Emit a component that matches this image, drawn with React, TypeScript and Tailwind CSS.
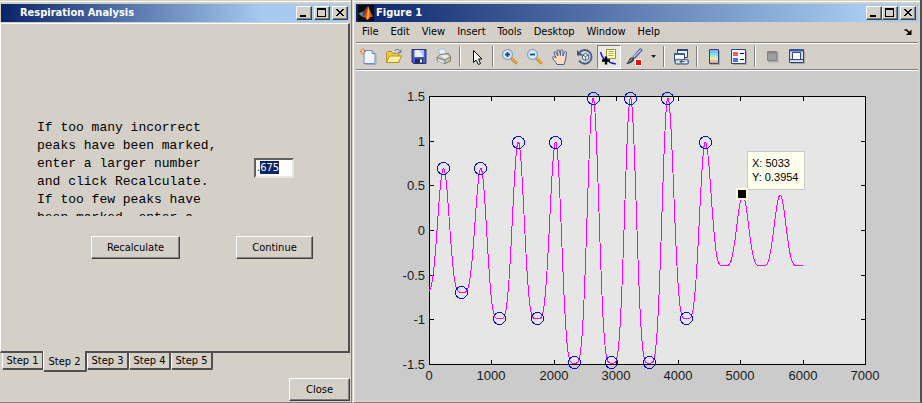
import { useEffect, useRef } from "react";
import type { ReactNode } from "react";

function CaptionButton({ label, children }: { label: string; children: ReactNode }) {
  return (
    <button
      aria-label={label}
      className="flex h-[14px] w-4 items-center justify-center border border-t-white border-l-white border-r-[#404040] border-b-[#404040] bg-[#d4d0c8] shadow-[inset_-1px_-1px_0_#808080]"
    >
      <svg width="12" height="10" viewBox="0 0 12 10" shapeRendering="crispEdges" fill="none" stroke="#000">
        {children}
      </svg>
    </button>
  );
}

function CaptionButtons({ joined = false }: { joined?: boolean }) {
  return (
    <div className={joined ? "ml-auto flex gap-[2px] pr-[2px]" : "ml-auto flex gap-[2px] pr-px"}>
      <div className={joined ? "flex" : "flex gap-[2px]"}>
        <CaptionButton label="Minimize">
          <path d="M2 8H8" strokeWidth="2" />
        </CaptionButton>
        <CaptionButton label="Maximize">
          <path d="M1.500 0.500V8.500H9.500V0.500" />
          <path d="M1 1H10" strokeWidth="2" />
        </CaptionButton>
      </div>
      <CaptionButton label="Close">
        <path
          d="M2 1h2v1h1v1h2v-1h1v-1h2v1h-1v1h-1v1h-1v1h1v1h1v1h1v1h-2v-1h-1v-1h-2v1h-1v1h-2v-1h1v-1h1v-1h1v-1h-1v-1h-1v-1h-1z"
          fill="#000"
          stroke="none"
        />
      </CaptionButton>
    </div>
  );
}

function PushButton({ children, className }: { children: ReactNode; className: string }) {
  return (
    <button
      className={`h-[23px] border border-t-white border-l-white border-r-[#404040] border-b-[#404040] bg-[#d4d0c8] shadow-[inset_-1px_-1px_0_#808080] ${className}`}
    >
      {children}
    </button>
  );
}

function ThresholdInput() {
  const ref = useRef<HTMLInputElement>(null);
  useEffect(() => {
    ref.current?.focus();
    ref.current?.setSelectionRange(1, 4);
  }, []);
  return (
    <input
      ref={ref}
      aria-label="Peak threshold"
      defaultValue=".675"
      className="h-5 w-10 border-2 border-t-[#606060] border-l-[#606060] border-r-[#e8e6e0] border-b-[#e8e6e0] bg-white px-px leading-4 caret-transparent outline-none selection:bg-[#0a246a] selection:text-white"
    />
  );
}

function StepTab({ label, active = false }: { label: string; active?: boolean }) {
  return (
    <button
      role="tab"
      aria-selected={active}
      className={
        active
          ? "-mt-[2px] -ml-px h-[21px] w-11 rounded-b-[2px] border-r-2 border-b-2 border-l border-l-white border-r-[#505050] border-b-[#505050] bg-[#d4d0c8] pt-[3px]"
          : "h-[17px] w-[42px] rounded-b-[2px] border-r-2 border-b-2 border-l border-l-white border-r-[#505050] border-b-[#505050] bg-[#d4d0c8]"
      }
    >
      {label}
    </button>
  );
}

function AnalysisWindow() {
  return (
    <section className="flex w-[352px] shrink-0 flex-col border-r border-b border-[#808080] bg-[#d4d0c8] pt-px">
      <div className="mb-[2px] h-px bg-white" />
      <header className="mr-[2px] ml-px flex h-[18px] items-center bg-[linear-gradient(90deg,#0a246a,#a6caf0_75%)] pl-[19px]">
        <h1 className="text-[11px] font-bold text-white">Respiration Analysis</h1>
        <CaptionButtons />
      </header>
      <div className="mt-px mr-px flex h-[330px] flex-col border-t border-r-2 border-b-2 border-l border-t-white border-l-white border-r-[#505050] border-b-[#505050] pt-[95px]">
        <div className="flex items-center pl-9">
          <p className="h-[97px] w-[217px] overflow-hidden font-['Liberation_Mono','Courier_New',monospace] text-[13px] leading-[18px] whitespace-pre">
            {"If too many incorrect\npeaks have been marked,\nenter a larger number\nand click Recalculate.\nIf too few peaks have\nbeen marked, enter a"}
          </p>
          <ThresholdInput />
        </div>
        <div className="mt-5 flex gap-14 pl-[90px]">
          <PushButton className="w-[89px]">Recalculate</PushButton>
          <PushButton className="w-[77px]">Continue</PushButton>
        </div>
      </div>
      <div role="tablist" className="flex h-[25px] items-start pl-[2px]">
        <StepTab label="Step 1" />
        <StepTab label="Step 2" active />
        <StepTab label="Step 3" />
        <StepTab label="Step 4" />
        <StepTab label="Step 5" />
      </div>
      <div className="flex justify-end pr-px">
        <PushButton className="w-[61px]">Close</PushButton>
      </div>
    </section>
  );
}

function Icon({ children }: { children: ReactNode }) {
  return (
    <svg width="18" height="18" viewBox="0 0 18 18" fill="none" aria-hidden="true">
      {children}
    </svg>
  );
}

function Tool({ label, pressed = false, children }: { label: string; pressed?: boolean; children: ReactNode }) {
  return (
    <button
      aria-label={label}
      className={
        pressed
          ? "flex h-6 w-6 items-center justify-center border border-t-[#808080] border-l-[#808080] border-r-white border-b-white bg-[#eae8e4]"
          : "flex h-6 w-[25px] items-center justify-center"
      }
    >
      {children}
    </button>
  );
}

function Separator() {
  return <div className="mx-[3px] h-[21px] w-[2px] border-r border-l border-l-[#808080] border-r-white" />;
}

function Magnifier({ plus }: { plus: boolean }) {
  return (
    <Icon>
      <path d="M10 10l6 5.500" stroke="#b4721c" strokeWidth="3" />
      <path d="M10.500 10l6 5.500" stroke="#f5a53c" strokeWidth="2" />
      <circle cx="6.500" cy="6.500" r="5" fill="#d5f0f8" stroke="#94a9c8" strokeWidth="1.500" />
      <path d={plus ? "M4 6.500h5M6.500 4v5" : "M4 6.500h5"} stroke="#1c4a94" strokeWidth="1.800" />
    </Icon>
  );
}

function Toolbar() {
  return (
    <div role="toolbar" className="flex h-[25px] items-center">
      <Tool label="New figure">
        <Icon>
          <path d="M4 2.500h8l3 3v10H4z" fill="#eef5ff" stroke="#6d8fc4" />
          <path d="M12 2.500v3h3" fill="#c5d8f2" stroke="#6d8fc4" />
          <path d="M5 16.500h11V6" stroke="#9fa8b8" />
          <path d="M3 0.500v6M0 3.500h6M1 1.500l4 4M5 1.500l-4 4" stroke="#e0643c" />
          <rect x="2" y="2.500" width="2" height="2" fill="#fff1a0" />
        </Icon>
      </Tool>
      <Tool label="Open">
        <Icon>
          <path d="M1.500 14.500V4.500l1-1h4l1.500 2h6v9z" fill="#f2c94e" stroke="#b8912c" />
          <path d="M1.500 14.500l3-6.500h12l-3 6.500z" fill="#fff09c" stroke="#b8912c" />
          <path d="M9.500 3c2-2.500 5-2 6 1M16 1.500v3h-3" stroke="#607d9c" />
        </Icon>
      </Tool>
      <Tool label="Save">
        <Icon>
          <path d="M2 1.500h14v14H3.500L2 14z" fill="#4c58cc" stroke="#282f88" />
          <path d="M4.500 2h9v7h-9z" fill="#e8f0ff" />
          <path d="M9 2h4.500v6z" fill="#afc5f1" />
          <path d="M5 10.500h8v5H5z" fill="#252b60" />
          <path d="M10 11.500h2v3h-2z" fill="#f0f4ff" />
        </Icon>
      </Tool>
      <Tool label="Print">
        <Icon>
          <path d="M5 8L3.500 1.500l6-1L12 8z" fill="#e8f2ff" stroke="#a6b8d4" />
          <path d="M2 9.500L5 6.500l8.500-1 2 3.500v4l-5.500 2.500-8-3z" fill="#c9c9c9" stroke="#777" />
          <path d="M2 9.500l8 2.500 5.500-3M10 12v3.500" stroke="#808080" />
          <path d="M5 7.500l7-.5 2 1.500-4 2z" fill="#eee" />
          <path d="M3 12.500l6 2" stroke="#fff" />
          <circle cx="13.500" cy="11.500" r="1" fill="#d9b13d" />
        </Icon>
      </Tool>
      <Separator />
      <Tool label="Edit plot">
        <Icon>
          <path d="M5.500 2.500v12l2.500-2.500 2.500 4.500 2-1-2-4.500h3.500z" fill="#fff" stroke="#000" />
        </Icon>
      </Tool>
      <Separator />
      <Tool label="Zoom in">
        <Magnifier plus />
      </Tool>
      <Tool label="Zoom out">
        <Magnifier plus={false} />
      </Tool>
      <Tool label="Pan">
        <Icon>
          <path
            d="M6 16.500C5 13.500 1.500 11.500 1.500 9.500 2 8 3.500 8.500 5 10L3 5c0-1.500 1.500-2 2-.5L7 8 6 3c.3-1.700 2-1.700 2.400 0L9.500 7.500 9.700 2.500c.5-1.300 2-1.200 2.200.3L12 8l1.500-4c.8-1.200 2.200-.5 2 .8L14.500 12l-1.500 4.500z"
            fill="#fbdcbc"
            stroke="#425f9e"
          />
        </Icon>
      </Tool>
      <Tool label="Rotate 3D">
        <Icon>
          <path d="M3.500 4.500A6.800 6.800 0 1 1 3 12.500" stroke="#4a5e86" strokeWidth="2" />
          <path d="M1 2v5.500h6z" fill="#3f5278" />
          <path d="M6.500 7L9.500 5.500 12.500 7v4L9.500 12.500 6.500 11z" fill="#e9f1ff" stroke="#526b9b" />
          <path d="M6.500 7l3 1.500 3-1.500M9.500 8.500v4" stroke="#526b9b" />
        </Icon>
      </Tool>
      <Tool label="Data cursor" pressed>
        <Icon>
          <path d="M0.500 4c1 4 2 6 4.500 8M9 14c3 1 4 1.500 7 2" stroke="#0000e8" strokeWidth="1.200" />
          <path d="M6.500 1.500h9v9h-9z" fill="#ffffb8" stroke="#909038" />
          <path d="M8.500 3.500h5M8.500 5.500h5M8.500 7.500h5" stroke="#a8a86c" />
          <path d="M6 8.500v8M2 12.500h8" stroke="#000" strokeWidth="2.400" />
        </Icon>
      </Tool>
      <Tool label="Brush">
        <Icon>
          <path d="M16.500 1L9 9.500" stroke="#3a4c9c" strokeWidth="3.400" />
          <path d="M16 1.500L9 9" stroke="#c5d6ff" strokeWidth="1.200" />
          <path d="M9.500 10C9 14 5 16 1 16c2-1 2-3 3-4.500C5.500 9.500 7.500 8.500 9.500 10z" fill="#424242" />
          <path d="M4 13.500l3-2.500" stroke="#aaa" />
          <path d="M10.500 11.500h6v6h-6z" fill="#f00" stroke="#fff" />
        </Icon>
      </Tool>
      <button aria-label="Brush colors" className="flex h-6 w-[14px] items-center justify-center pb-px">
        <svg width="5" height="3" viewBox="0 0 5 3" fill="#222">
          <path d="M0 0h5L2.500 3z" />
        </svg>
      </button>
      <Separator />
      <Tool label="Link plot">
        <Icon>
          <path d="M5.500 1.500h10v8h-10z" fill="#eef5ff" stroke="#2b4685" />
          <path d="M5.500 2h10" stroke="#2b4685" strokeWidth="2" />
          <path d="M2.500 5.500h10v8h-10z" fill="#fff" stroke="#2b4685" />
          <path d="M2.500 6h10" stroke="#3a5ca8" strokeWidth="2" />
          <rect x="3" y="11.500" width="7.500" height="4.500" rx="2.200" fill="#d6e2ef" stroke="#607890" strokeWidth="1.400" />
          <rect x="9" y="11.500" width="7.500" height="4.500" rx="2.200" fill="#d6e2ef" stroke="#607890" strokeWidth="1.400" />
          <path d="M7.500 13.500h5" stroke="#47607c" />
        </Icon>
      </Tool>
      <Separator />
      <Tool label="Insert colorbar">
        <Icon>
          <defs>
            <linearGradient id="colorbar" x1="0" y1="0" x2="0" y2="1">
              <stop offset="0" stopColor="#8c9cf0" />
              <stop offset=".35" stopColor="#7fe0f4" />
              <stop offset=".65" stopColor="#eaf0a0" />
              <stop offset="1" stopColor="#f08c84" />
            </linearGradient>
          </defs>
          <path d="M5 16.500h9.500V3" stroke="#a5a5a5" />
          <path d="M4.500 1.500h9v14h-9z" fill="url(#colorbar)" stroke="#2b4685" />
        </Icon>
      </Tool>
      <Tool label="Insert legend">
        <Icon>
          <path d="M3 16.500h13.500V3" stroke="#a5a5a5" />
          <path d="M1.500 1.500h14v14h-14z" fill="#f4f8ff" stroke="#2b4685" />
          <path d="M3 4h5v4H3z" fill="#e86464" />
          <path d="M3 10h5v4H3z" fill="#6464e8" />
          <path d="M10 5.500h4M10 11.500h4" stroke="#000" />
        </Icon>
      </Tool>
      <Separator />
      <Tool label="Hide plot tools">
        <Icon>
          <path d="M5 13.500h9.500V4" stroke="#aaa" strokeWidth="2" />
          <path d="M4.500 3.500h9v9h-9z" fill="#9f9f9f" stroke="#858585" />
          <path d="M4.500 4.500h9" stroke="#858585" strokeWidth="2" />
        </Icon>
      </Tool>
      <Tool label="Show plot tools">
        <Icon>
          <path d="M3 15.500h13.500V3" stroke="#a5a5a5" />
          <path d="M1.500 1.500h14v13h-14z" fill="#d9d9d9" stroke="#2b4685" />
          <path d="M1.500 2.500h14" stroke="#3a5ca8" strokeWidth="2" />
          <path d="M4.500 4.500h8v7h-8z" fill="#fff" stroke="#2b4685" />
          <path d="M2 11.500h13" stroke="#2b4685" />
        </Icon>
      </Tool>
    </div>
  );
}

const LEFT = 73;
const STEP_X = 436 / 7;
const ZERO_Y = 159;
const UNIT_Y = 268 / 3;

/* Values at the turning points of the respiration trace. */
const TROUGHS = [-0.7, -0.7, -1, -1, -1.5, -1.5, -1.5, -1, -0.4, -0.4, -0.4];
const PEAKS = [0.7, 0.7, 1, 1, 1.5, 1.5, 1.5, 1, 0.4, 0.4];
const PERIOD = 37.4;
const FIRST_PEAK = 14;

const toY = (v: number) => ZERO_Y - v * UNIT_Y;

function traceValue(x: number) {
  const k = Math.min(PEAKS.length - 1, Math.max(0, Math.round((x - FIRST_PEAK) / PERIOD)));
  const offset = (x - FIRST_PEAK) / PERIOD - k;
  const trough = offset < 0 ? TROUGHS[k] : TROUGHS[k + 1];
  const shape = Math.abs(offset) >= 0.5 ? 0 : Math.pow(Math.cos(Math.PI * offset), 4.4);
  return (trough + (PEAKS[k] - trough) * shape) * 0.99;
}

const TRACE = Array.from({ length: 748 }, (_, i) => i / 2)
  .map((x) => `${LEFT + x + 0.5},${(toY(traceValue(x)) + 0.5).toFixed(2)}`)
  .join(" ");

/* Offsets of the detected troughs from the y axis. */
const TROUGH_X = [32, 70, 108, 145, 182, 220, 257];

const MARKS = [
  ...PEAKS.slice(0, 8).map((v, i) => ({ x: FIRST_PEAK + i * PERIOD, v })),
  ...TROUGH_X.map((x, i) => ({ x, v: TROUGHS[i + 1] })),
];

function Chart() {
  const yTicks = [1.5, 1, 0.5, 0, -0.5, -1, -1.5];
  const xTicks = [0, 1000, 2000, 3000, 4000, 5000, 6000, 7000];
  return (
    <svg
      viewBox="0 0 562 329"
      className="block h-auto w-full font-['Liberation_Sans',Arial,sans-serif]"
      role="img"
      aria-label="Respiration trace with marked peaks"
    >
      <g shapeRendering="crispEdges" fill="none" stroke="#000">
        <rect x="73.500" y="25.500" width="436" height="268" fill="#e6e6e6" />
        {yTicks.map((t) => (
          <path key={t} d={`M73 ${Math.round(toY(t)) + 0.5}h5M510 ${Math.round(toY(t)) + 0.5}h-5`} />
        ))}
        {xTicks.map((t, i) => (
          <path key={t} d={`M${Math.round(LEFT + i * STEP_X) + 0.5} 25v5m0 264v-5`} />
        ))}
      </g>
      <g fontSize="13" fill="#1a1a1a">
        {yTicks.map((t) => (
          <text key={t} x="69" y={Math.round(toY(t)) + 5} textAnchor="end">
            {t}
          </text>
        ))}
        {xTicks.map((t, i) => (
          <text key={t} x={Math.round(LEFT + i * STEP_X)} y="309" textAnchor="middle">
            {t}
          </text>
        ))}
      </g>
      <polyline points={TRACE} fill="none" stroke="#ff00ff" shapeRendering="crispEdges" />
      <g fill="none" stroke="#0000ff" shapeRendering="crispEdges">
        {MARKS.map((m) => (
          <circle key={m.x} cx={Math.round(LEFT + m.x) + 0.5} cy={Math.round(toY(m.v * 0.985)) + 0.5} r="6" />
        ))}
      </g>
      <g shapeRendering="crispEdges">
        <rect x="391.500" y="80.500" width="57" height="38" fill="#ffffee" stroke="#c8c8c8" />
        <rect x="380" y="117" width="12" height="12" fill="#ffffe0" />
        <rect x="382" y="119" width="8" height="8" fill="#000" />
      </g>
      <g fontSize="11" fill="#000">
        <text x="396" y="96">X: 5033</text>
        <text x="396" y="110">Y: 0.3954</text>
      </g>
    </svg>
  );
}

function MatlabLogo() {
  return (
    <svg width="16" height="16" viewBox="0 0 16 16" aria-hidden="true">
      <rect width="16" height="16" fill="#0a0a0a" />
      <path d="M0.500 8.500L5 6.500 7.500 9 4.500 12z" fill="#3c9cb4" />
      <path d="M5 6.500C7 5.500 8 2 10 1L8 9 5.500 12 4.500 12z" fill="#7b3a30" />
      <path d="M10 1c1 1 3 8 5.500 11-2-.5-3 0-3.500 1-1 1-2 2-3 2-1-2-2-3-4.500-3C8 11 9 4 10 1z" fill="#e0521c" />
      <path d="M10 1c1 3 1.500 7 1 11l-2 3C8 13 10 8 10 1z" fill="#f8b43c" />
    </svg>
  );
}

const MENUS = ["File", "Edit", "View", "Insert", "Tools", "Desktop", "Window", "Help"];

function FigureWindow() {
  return (
    <section className="ml-px flex min-w-0 flex-1 flex-col border-r-2 border-b border-l border-l-white border-r-[#505050] border-b-[#808080] bg-[#d4d0c8] pt-px">
      <div className="mb-[2px] h-px bg-white" />
      <div className="flex flex-col px-[2px] pb-[2px]">
        <header className="flex h-[18px] items-center gap-[2px] bg-[linear-gradient(90deg,#0a246a,#a6caf0_90%)] pl-[2px]">
          <MatlabLogo />
          <h1 className="text-[11px] font-bold text-white">Figure 1</h1>
          <CaptionButtons joined />
        </header>
        <nav className="flex h-5 items-center pr-1">
          {MENUS.map((m) => (
            <button key={m} className="px-[6px]">
              {m}
            </button>
          ))}
          <button aria-label="Dock figure" className="mr-[2px] ml-auto">
            <svg width="8" height="6" viewBox="0 0 8 6" fill="none">
              <path d="M0.500 1h2l3 3" stroke="#000" strokeWidth="1.600" />
              <path d="M7.500 0.500V6H2z" fill="#000" />
            </svg>
          </button>
        </nav>
        <div className="h-[2px] border-t border-b border-t-[#808080] border-b-white" />
        <Toolbar />
        <div className="h-[2px] border-t border-b border-t-[#808080] border-b-white" />
        <div className="bg-[#cbcbcb]">
          <Chart />
        </div>
      </div>
    </section>
  );
}

export default function App() {
  return (
    <main className="flex bg-[#d4d0c8] font-['DejaVu_Sans_Condensed','Noto_Sans',sans-serif] text-[11px] leading-[14px] text-black">
      <AnalysisWindow />
      <FigureWindow />
    </main>
  );
}
